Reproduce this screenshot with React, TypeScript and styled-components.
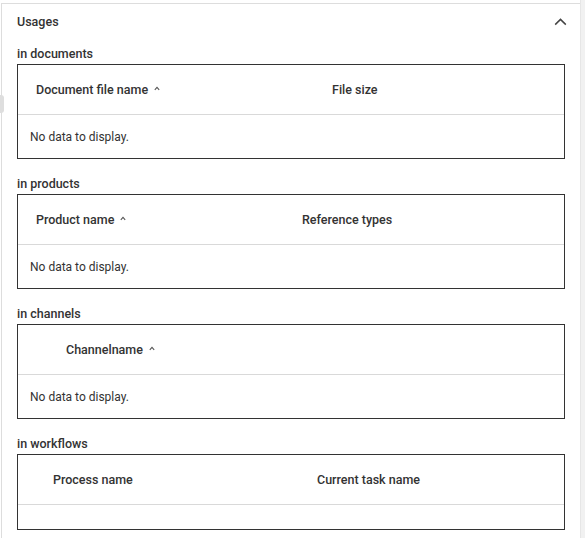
import React from 'react';
import styled, { createGlobalStyle } from 'styled-components';

const GlobalStyle = createGlobalStyle`
  html, body {
    margin: 0;
    padding: 0;
    background: #ffffff;
  }
  body {
    font-family: Roboto, "Liberation Sans", Arial, sans-serif;
    color: #333333;
  }
`;

const Page = styled.div`
  position: relative;
  display: flex;
  width: 585px;
  height: 538px;
  overflow: hidden;
  background: #ffffff;
`;

const SideTab = styled.div`
  position: absolute;
  left: 0;
  top: 95px;
  width: 4px;
  height: 18px;
  background: #dedede;
  border-radius: 0 3px 3px 0;
`;

const Panel = styled.section`
  flex: 1;
  margin: 3px 0 0 1px;
  border-top: 1px solid #dddddd;
  border-left: 1px solid #dddddd;
  padding: 0 15px 0 15px;
`;

const ScrollTrack = styled.div`
  width: 4px;
  background: #f1f1f1;
  border-left: 1px solid #e6e6e6;
`;

const PanelHeader = styled.div`
  display: flex;
  align-items: center;
  justify-content: space-between;
  height: 35px;
  font-size: 12.5px;
  font-weight: 500;
  color: #333333;
`;

const Collapse = styled.button`
  display: flex;
  align-items: center;
  justify-content: center;
  width: 14px;
  height: 14px;
  margin-right: -2px;
  padding: 0;
  border: 0;
  background: none;
  color: #444444;
`;

const Section = styled.div`
  margin-top: 8px;
  & + & {
    margin-top: 18px;
  }
`;

const SectionLabel = styled.div`
  font-size: 12.5px;
  font-weight: 500;
  line-height: 14px;
  color: #333333;
  margin-bottom: 3px;
`;

const Table = styled.div`
  border: 1px solid #333333;
`;

const HeaderRow = styled.div<{ $columns: string; $indent: number }>`
  display: grid;
  grid-template-columns: ${p => p.$columns};
  align-items: center;
  height: 49px;
  padding-left: ${p => p.$indent}px;
  border-bottom: 1px solid #d9d9d9;
`;

const HeaderCell = styled.div`
  display: flex;
  align-items: center;
  gap: 6px;
  font-size: 12.5px;
  font-weight: 500;
  color: #333333;
  white-space: nowrap;
`;

const BodyRow = styled.div<{ $height: number }>`
  display: flex;
  align-items: center;
  height: ${p => p.$height}px;
  padding-left: 12px;
  font-size: 12px;
  color: #333333;
`;

const SortCaret = () => (
  <svg width="6" height="5" viewBox="0 0 6 5" style={{ marginTop: -3 }}>
    <polyline points="0.8,3.8 3,1.4 5.2,3.8" fill="none" stroke="#555" strokeWidth="1.1" />
  </svg>
);

type Column = { label: string; sortable?: boolean };

type UsageTable = {
  label: string;
  columns: Column[];
  template: string;
  indent: number;
  empty?: boolean;
};

const tables: UsageTable[] = [
  {
    label: 'in documents',
    columns: [{ label: 'Document file name', sortable: true }, { label: 'File size' }],
    template: '296px 1fr',
    indent: 18,
  },
  {
    label: 'in products',
    columns: [{ label: 'Product name', sortable: true }, { label: 'Reference types' }],
    template: '266px 1fr',
    indent: 18,
  },
  {
    label: 'in channels',
    columns: [{ label: 'Channelname', sortable: true }],
    template: '1fr',
    indent: 48,
  },
  {
    label: 'in workflows',
    columns: [{ label: 'Process name' }, { label: 'Current task name' }],
    template: '264px 1fr',
    indent: 35,
    empty: true,
  },
];

const App: React.FC = () => {
  return (
    <>
      <GlobalStyle />
      <Page>
        <SideTab />
        <Panel>
          <PanelHeader>
            <span>Usages</span>
            <Collapse aria-label="Collapse">
              <svg width="13" height="8" viewBox="0 0 13 8">
                <polyline points="1.2,6.6 6.5,1.4 11.8,6.6" fill="none" stroke="currentColor" strokeWidth="1.5" />
              </svg>
            </Collapse>
          </PanelHeader>

          {tables.map(t => (
            <Section key={t.label}>
              <SectionLabel>{t.label}</SectionLabel>
              <Table>
                <HeaderRow $columns={t.template} $indent={t.indent}>
                  {t.columns.map(c => (
                    <HeaderCell key={c.label}>
                      {c.label}
                      {c.sortable && <SortCaret />}
                    </HeaderCell>
                  ))}
                </HeaderRow>
                <BodyRow $height={t.empty ? 24 : 43}>
                  {!t.empty && 'No data to display.'}
                </BodyRow>
              </Table>
            </Section>
          ))}
        </Panel>
        <ScrollTrack />
      </Page>
    </>
  );
};

export default App;
